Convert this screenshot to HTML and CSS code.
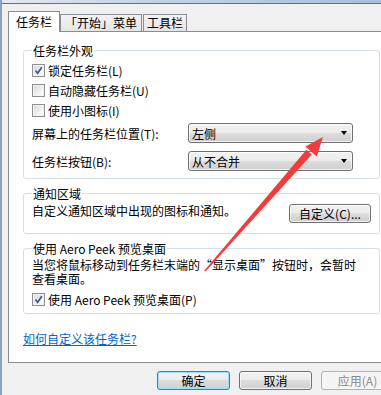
FILE: index.html
```html
<!DOCTYPE html>
<html lang="zh-CN">
<head>
  <meta charset="UTF-8" />
  <title>任务栏和「开始」菜单属性</title>
  <link rel="stylesheet" href="styles.css">
</head>
<body>
  <div class="window">
    <div class="frame-top"></div>
    <div class="dialog">
      <div class="tabs">
        <div class="tab active">任务栏</div>
        <div class="tab tab-start">「开始」菜单</div>
        <div class="tab tab-tools">工具栏</div>
      </div>

      <div class="panel">
        <fieldset class="group">
          <legend>任务栏外观</legend>
          <div class="check-row">
            <span class="box"><svg width="11" height="11" viewBox="0 0 11 11"><path d="M2.5 5.5 L4.6 8.2 L8.8 2.2" fill="none" stroke="#3d57a3" stroke-width="1.8"/></svg></span>
            <span>锁定任务栏(L)</span>
          </div>
          <div class="check-row">
            <span class="box"></span>
            <span>自动隐藏任务栏(U)</span>
          </div>
          <div class="check-row">
            <span class="box"></span>
            <span>使用小图标(I)</span>
          </div>
          <div class="field-row first">
            <span class="field-label">屏幕上的任务栏位置(T):</span>
            <div class="combo">左侧</div>
          </div>
          <div class="field-row second">
            <span class="field-label">任务栏按钮(B):</span>
            <div class="combo">从不合并</div>
          </div>
        </fieldset>

        <fieldset class="group notify">
          <legend>通知区域</legend>
          <div class="notify-row">
            <span class="text">自定义通知区域中出现的图标和通知。</span>
            <button class="btn btn-custom">自定义(C)...</button>
          </div>
        </fieldset>

        <fieldset class="group peek">
          <legend>使用 Aero Peek 预览桌面</legend>
          <p class="text peek-text">当您将鼠标移动到任务栏末端的“显示桌面”按钮时，会暂时<br>查看桌面。</p>
          <div class="check-row">
            <span class="box"><svg width="11" height="11" viewBox="0 0 11 11"><path d="M2.5 5.5 L4.6 8.2 L8.8 2.2" fill="none" stroke="#3d57a3" stroke-width="1.8"/></svg></span>
            <span>使用 Aero Peek 预览桌面(P)</span>
          </div>
        </fieldset>

        <a class="help" href="#">如何自定义该任务栏?</a>
      </div>

      <div class="buttons">
        <button class="btn default">确定</button>
        <button class="btn">取消</button>
        <button class="btn" disabled>应用(A)</button>
      </div>
    </div>

    <!-- red annotation arrow drawn over the dialog -->
    <svg class="arrow" width="381" height="395" viewBox="0 0 381 395">
      <polygon points="204.2,270.7 205.8,271.3 311.8,154.6 306.4,149.8" fill="#f23c3c"/>
      <polygon points="323,137 316.8,156.4 305.4,146.6" fill="#f23c3c"/>
    </svg>
  </div>
</body>
</html>
```

FILE: styles.css
```css
html, body {
  margin: 0;
  padding: 0;
  overflow: hidden;
  background: #f0f0f0;
}
body {
  font-family: "Noto Sans CJK SC", "Liberation Sans", sans-serif;
  font-size: 12px;
  line-height: 13px;
  color: #000;
}
.window {
  position: relative;
  width: 381px;
  height: 395px;
  overflow: hidden;
  box-sizing: border-box;
  border-left: 2px solid #8ba2bd;
  background: #f0f0f0;
}
.frame-top {
  height: 3px;
  background: linear-gradient(to right, #e4e9ef, #c3d3e4 40%, #a9c0d8);
  border-bottom: 1px solid #5d718b;
  margin-left: -2px;
}
.dialog {
  width: 401px;
  box-sizing: border-box;
  padding: 7px 8px 0 6px;
}
.tabs {
  display: flex;
  align-items: flex-end;
  height: 20px;
}
.tab {
  box-sizing: border-box;
  height: 17px;
  border: 1px solid #898c95;
  border-bottom: none;
  background: linear-gradient(#f2f2f2, #e6e6e6);
  text-align: center;
  line-height: 16px;
}
.tab.active {
  position: relative;
  z-index: 1;
  width: 52px;
  height: 21px;
  margin-bottom: -1px;
  background: #fff;
  line-height: 20px;
}
.tab-start {
  width: 82px;
}
.tab-tools {
  width: 44px;
  margin-left: 1px;
}
.panel {
  width: 387px;
  box-sizing: border-box;
  border: 1px solid #898c95;
  background: #fff;
  padding: 12px 14px 17px 14px;
}
.group {
  margin: 0;
  border: 1px solid #d5dfe5;
  border-radius: 3px;
  padding: 3px 8px 7px 8px;
  min-width: 0;
}
.group legend {
  padding: 0 1px;
  line-height: 13px;
}
.group.notify {
  margin-top: 8px;
  padding: 4px 8px 10px 8px;
}
.group.peek {
  margin-top: 8px;
  padding: 3px 8px 4px 8px;
}
.check-row {
  display: flex;
  align-items: center;
  gap: 3px;
  height: 20px;
}
.peek .check-row {
  margin-top: 3px;
}
.box {
  box-sizing: border-box;
  width: 13px;
  height: 13px;
  border: 1px solid #8e8f8f;
  background: linear-gradient(135deg, #d3d6da, #f6f6f6 70%, #ffffff);
  box-shadow: inset 0 0 0 1px #f3f3f3;
  display: flex;
  align-items: center;
  justify-content: center;
}
.field-row {
  display: flex;
  align-items: center;
  height: 20px;
}
.field-row.first {
  margin-top: 3px;
}
.field-row.second {
  margin-top: 8px;
}
.field-label {
  width: 156px;
}
.combo {
  box-sizing: border-box;
  width: 165px;
  height: 20px;
  border: 1px solid #707070;
  border-radius: 3px;
  background: linear-gradient(#f2f2f2 0%, #ebebeb 50%, #dddddd 50%, #cfcfcf 100%);
  box-shadow: inset 0 0 0 1px rgba(255,255,255,0.7);
  display: flex;
  align-items: center;
  justify-content: space-between;
  padding: 0 5px 0 3px;
}
.combo::after {
  content: "";
  border-left: 3.5px solid transparent;
  border-right: 3.5px solid transparent;
  border-top: 4px solid #000;
}
.text {
  margin: 0;
  line-height: 13px;
}
.peek-text {
  line-height: 14px;
}
.notify-row {
  display: flex;
  justify-content: space-between;
  align-items: flex-start;
}
.btn {
  box-sizing: border-box;
  width: 73px;
  height: 19px;
  padding: 0;
  font-family: inherit;
  font-size: 12px;
  line-height: 13px;
  color: #000;
  border: 1px solid #707070;
  border-radius: 3px;
  background: linear-gradient(#f2f2f2 0%, #ebebeb 50%, #dddddd 50%, #cfcfcf 100%);
  box-shadow: inset 0 0 0 1px rgba(255,255,255,0.7);
}
.btn-custom {
  width: 82px;
}
.btn.default {
  border-color: #3c7fb1;
  box-shadow: inset 0 0 0 1px #9fdcf8;
}
.btn:disabled {
  border-color: #adb2b5;
  background: #f4f4f4;
  box-shadow: none;
  color: #8b8b8b;
}
.help {
  display: block;
  margin-top: 18px;
  color: #0066cc;
  text-decoration: underline;
  line-height: 13px;
}
.buttons {
  display: flex;
  justify-content: flex-end;
  gap: 9px;
  margin-top: 8px;
  padding-right: 1px;
}
.arrow {
  position: absolute;
  left: -2px;
  top: 0;
  pointer-events: none;
}
```
